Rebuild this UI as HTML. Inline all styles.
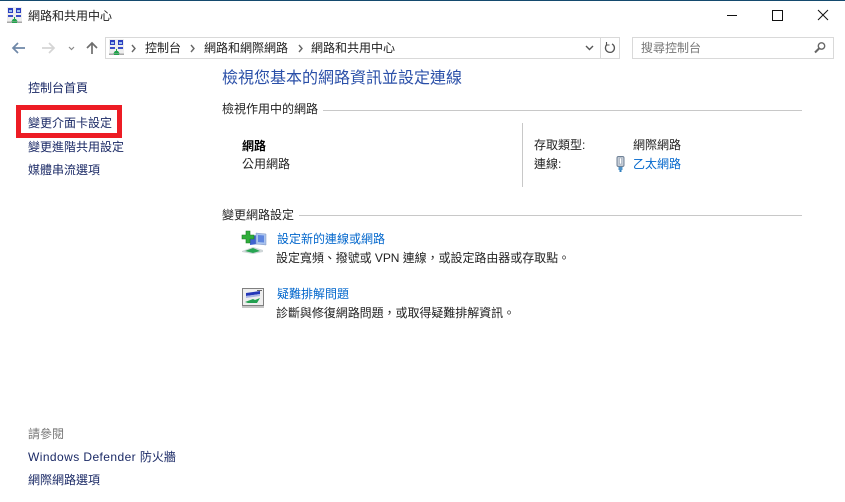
<!DOCTYPE html>
<html lang="zh-TW"><head><meta charset="utf-8"><title>網路和共用中心</title>
<style>
html,body{margin:0;padding:0;background:#fff}
#p{position:relative;width:845px;height:502px;overflow:hidden;background:#fff;font-family:"Liberation Sans","Noto Sans CJK TC",sans-serif;font-size:12px;color:#1a1a1a}
.t{position:absolute;white-space:nowrap;line-height:16px}
.n{color:#1b2a66}
.b{color:#0066cc}
.r{position:absolute}
svg{position:absolute;overflow:visible}
</style></head><body><div id="p">
<div class="r" style="left:0;top:0;width:845px;height:1px;background:#144a6e"></div>

<svg style="left:7px;top:7px" width="16" height="16" viewBox="0 0 16 16"><rect x="0" y="0" width="15" height="15" fill="#eeeeee"/><rect x="1" y="1" width="5" height="5" fill="#2b3fc0"/><rect x="9" y="1" width="5" height="5" fill="#2b3fc0"/><rect x="2" y="3" width="3" height="2" fill="#9fc0ee"/><rect x="10" y="3" width="3" height="2" fill="#9fc0ee"/><rect x="1" y="8" width="5" height="2" fill="#3a4fc8"/><rect x="9" y="8" width="5" height="2" fill="#3a4fc8"/><path d="M4 15h7l-2-3h-1v-2h-1v2h-1z" fill="#1fa34a"/><rect x="0" y="14.5" width="15" height="1.5" fill="#a8a8a8"/><path d="M5 15h5v1H5z" fill="#1fa34a"/></svg>
<div class="t" style="left:28px;top:8px;color:#222">網路和共用中心</div>

<svg style="left:725px;top:9px" width="110" height="14" viewBox="0 0 110 14" fill="none" stroke="#111" stroke-width="1"><path d="M2 6.5h10"/><rect x="47.5" y="1.5" width="10" height="10"/><path d="M93 1l10 10M103 1l-10 10"/></svg>

<svg style="left:11px;top:41px" width="90" height="14" viewBox="0 0 90 14" fill="none"><path d="M2 7h12M7 2L2 7l5 5" stroke="#6f88a8" stroke-width="1.7"/><path d="M31 7h12M38 2l5 5-5 5" stroke="#d5d5d5" stroke-width="1.7"/><path d="M58 6l2.5 2.5L63 6" stroke="#8a8a8a" stroke-width="1.2"/><path d="M81 13V2M76 7l5-5 5 5" stroke="#6e6e6e" stroke-width="1.7"/></svg>

<div class="r" style="left:105px;top:37px;width:494px;height:20px;border:1px solid #d9d9d9"></div>
<div class="r" style="left:599px;top:37px;width:20px;height:20px;border:1px solid #d9d9d9;border-left:0"></div>
<svg style="left:109px;top:39px" width="16" height="16" viewBox="0 0 16 16"><rect x="0" y="0" width="15" height="15" fill="#eeeeee"/><rect x="1" y="1" width="5" height="5" fill="#2b3fc0"/><rect x="9" y="1" width="5" height="5" fill="#2b3fc0"/><rect x="2" y="3" width="3" height="2" fill="#9fc0ee"/><rect x="10" y="3" width="3" height="2" fill="#9fc0ee"/><rect x="1" y="8" width="5" height="2" fill="#3a4fc8"/><rect x="9" y="8" width="5" height="2" fill="#3a4fc8"/><path d="M4 15h7l-2-3h-1v-2h-1v2h-1z" fill="#1fa34a"/><rect x="0" y="14.5" width="15" height="1.5" fill="#a8a8a8"/><path d="M5 15h5v1H5z" fill="#1fa34a"/></svg>
<svg style="left:131px;top:44px" width="6" height="10" viewBox="0 0 6 10" fill="none"><path d="M1 1l3 3.5L1 8" stroke="#666" stroke-width="1.4"/></svg>
<div class="t" style="left:145px;top:40px;color:#222">控制台</div>
<svg style="left:190px;top:44px" width="6" height="10" viewBox="0 0 6 10" fill="none"><path d="M1 1l3 3.5L1 8" stroke="#666" stroke-width="1.4"/></svg>
<div class="t" style="left:204px;top:40px;color:#222">網路和網際網路</div>
<svg style="left:298px;top:44px" width="6" height="10" viewBox="0 0 6 10" fill="none"><path d="M1 1l3 3.5L1 8" stroke="#666" stroke-width="1.4"/></svg>
<div class="t" style="left:311px;top:40px;color:#222">網路和共用中心</div>
<svg style="left:585px;top:45px" width="10" height="6" viewBox="0 0 10 6" fill="none"><path d="M1 1l3.5 3.5L8 1" stroke="#555" stroke-width="1.4"/></svg>
<svg style="left:604px;top:41px" width="12" height="13" viewBox="0 0 12 13" fill="none"><path d="M3 3.5a4.5 4.5 0 1 0 5 -.6" stroke="#555" stroke-width="1.3"/><path d="M2.5 1v3h3" stroke="#555" stroke-width="1.1"/></svg>

<div class="r" style="left:632px;top:37px;width:200px;height:20px;border:1px solid #d9d9d9"></div>
<div class="t" style="left:641px;top:40px;color:#777">搜尋控制台</div>
<svg style="left:813px;top:41px" width="14" height="14" viewBox="0 0 14 14" fill="none"><circle cx="8.5" cy="5" r="3.2" stroke="#666" stroke-width="1.4"/><path d="M6 7.5L2 11.5" stroke="#666" stroke-width="2"/></svg>

<div class="t n" style="left:28px;top:80px">控制台首頁</div>
<div class="r" style="left:16px;top:105px;width:96px;height:23px;border:5px solid #ed1c24"></div>
<div class="t n" style="left:28px;top:115px">變更介面卡設定</div>
<div class="t n" style="left:28px;top:139px">變更進階共用設定</div>
<div class="t n" style="left:28px;top:162px">媒體串流選項</div>

<div class="t" style="left:28px;top:426px;color:#777">請參閱</div>
<div class="t n" style="left:28px;top:449px"><span style="letter-spacing:.42px">Windows Defender </span>防火牆</div>
<div class="t n" style="left:28px;top:472px">網際網路選項</div>

<div class="t" style="left:222px;top:70px;font-size:16px;line-height:18px;color:#2a4fa8">檢視您基本的網路資訊並設定連線</div>

<div class="t" style="left:222px;top:101px;color:#222">檢視作用中的網路</div>
<div class="r" style="left:323px;top:110px;width:479px;height:1px;background:#c8c8c8"></div>
<div class="t" style="left:242px;top:138px;color:#000;font-weight:bold">網路</div>
<div class="t" style="left:242px;top:156px;color:#222">公用網路</div>
<div class="r" style="left:522px;top:123px;width:1px;height:64px;background:#c8c8c8"></div>
<div class="t" style="left:534px;top:137px;color:#222">存取類型:</div>
<div class="t" style="left:633px;top:137px;color:#222">網際網路</div>
<div class="t" style="left:534px;top:156px;color:#222">連線:</div>
<svg style="left:616px;top:156px" width="10" height="16" viewBox="0 0 10 16"><rect x="1" y="0.5" width="7" height="10" rx="1.5" fill="#c4ccd6" stroke="#6f8196"/><rect x="3.5" y="2" width="2" height="6" fill="#fff" stroke="#8a98a8" stroke-width=".5"/><rect x="2.5" y="11" width="4" height="3" fill="#4f93c9"/><rect x="3.5" y="14" width="2" height="2" fill="#2f7fbf"/></svg>
<div class="t b" style="left:633px;top:156px">乙太網路</div>

<div class="t" style="left:222px;top:207px;color:#222">變更網路設定</div>
<div class="r" style="left:299px;top:215px;width:503px;height:1px;background:#c8c8c8"></div>

<svg style="left:241px;top:230px" width="26" height="26" viewBox="0 0 26 26"><path d="M9 6l8-1v9l-8 1z" fill="#3f63cf"/><path d="M15 3l10 1v11l-10-1z" fill="#a9c3ee" stroke="#7f93c0" stroke-width=".5"/><path d="M17 5l6 .5v7l-6-.5z" fill="#5f86df"/><path d="M1 21l11-4 10 3 0 2-10 2-11-2z" fill="#cfd6d8"/><path d="M4 21l8-3 7 3-7 2z" fill="#27a552"/><path d="M1 5h4V1h4v4h4v4H9v4H5V9H1z" fill="#2fae3a" stroke="#1c7a26" stroke-width=".6"/></svg>
<div class="t b" style="left:277px;top:231px">設定新的連線或網路</div>
<div class="t" style="left:276px;top:250px;color:#222;letter-spacing:-.05px">設定寬頻、撥號或 VPN 連線，或設定路由器或存取點。</div>

<svg style="left:242px;top:288px" width="23" height="20" viewBox="0 0 23 20"><rect x="0.5" y="0.5" width="21" height="17" fill="#eeeeee" stroke="#808080"/><rect x="0" y="18" width="22" height="2" fill="#c4c4c4"/><path d="M4 5l14-2v3L4 8z" fill="#2336b8"/><path d="M4 8l14-2v2L4 10z" fill="#aab4e4"/><path d="M3 14l8-3 2 1 5-2-3 5H6z" fill="#22a050"/><path d="M15 2h5v1h-5z" fill="#666"/></svg>
<div class="t b" style="left:277px;top:286px">疑難排解問題</div>
<div class="t" style="left:276px;top:305px;color:#222;letter-spacing:-.05px">診斷與修復網路問題，或取得疑難排解資訊。</div>
</div></body></html>
